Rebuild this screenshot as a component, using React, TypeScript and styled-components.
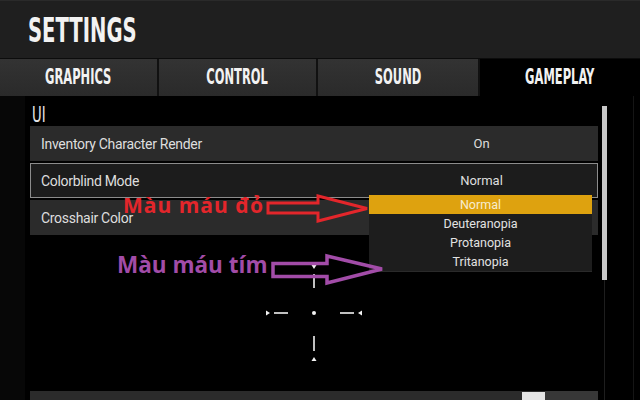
import React from "react";
import styled, { createGlobalStyle } from "styled-components";

const GlobalStyle = createGlobalStyle`
  html, body {
    margin: 0;
    padding: 0;
    background: #000;
  }
  body {
    font-family: Roboto, "Liberation Sans", sans-serif;
  }
`;

const Screen = styled.div`
  position: relative;
  width: 640px;
  height: 400px;
  overflow: hidden;
  background: #000;
`;

const Header = styled.div`
  height: 58px;
  box-sizing: border-box;
  border-top: 1px solid #2a2a2a;
  background: #1f1f1f;
  display: flex;
  align-items: center;
  padding-left: 28px;
`;

const Condensed = styled.span<{ $size: number; $scale: number; $weight?: number }>`
  display: inline-block;
  font-family: "DejaVu Sans Condensed", "DejaVu Sans", sans-serif;
  font-stretch: condensed;
  font-weight: ${(p) => p.$weight ?? 700};
  font-size: ${(p) => p.$size}px;
  line-height: ${(p) => p.$size}px;
  color: #f2f2f2;
  transform: scaleX(${(p) => p.$scale});
`;

const Title = styled(Condensed)`
  transform-origin: left center;
  margin-top: 2px;
`;

const TabBar = styled.div`
  height: 38px;
  box-sizing: border-box;
  border-top: 1px solid #0c0c0c;
  display: grid;
  grid-template-columns: 157px 157px 160px 1fr;
  column-gap: 2px;
  background: #111;
`;

const Tab = styled.div<{ $active?: boolean }>`
  display: flex;
  align-items: center;
  justify-content: center;
  background: ${(p) => (p.$active ? "#000" : "linear-gradient(#333, #2a2a2a)")};
`;

const TabLabel = styled(Condensed)`
  transform-origin: center;
  margin-top: -1px;
`;

const Content = styled.div`
  display: flex;
  height: 304px;
  overflow: hidden;
  background: linear-gradient(to right, #070707 25px, #000 25px);
`;

const Main = styled.div`
  margin-left: 30px;
  width: 568px;
  display: flex;
  flex-direction: column;
  flex-shrink: 0;
`;

const SectionLabel = styled.div`
  height: 32px;
  box-sizing: border-box;
  padding: 9px 0 0 2px;
`;

const UiLabel = styled(Condensed)`
  transform-origin: left center;
  color: #e6e6e6;
`;

const Rows = styled.div`
  display: flex;
  flex-direction: column;
  gap: 2px;
`;

const Row = styled.div<{ $selected?: boolean }>`
  position: relative;
  height: 35px;
  box-sizing: border-box;
  display: grid;
  grid-template-columns: 335px 1fr;
  align-items: center;
  background: ${(p) => (p.$selected ? "#1c1c1c" : "#2b2b2b")};
  border: 1px solid ${(p) => (p.$selected ? "#8c8c8c" : "transparent")};
  color: #dedede;
`;

const RowName = styled.span`
  padding-left: 10px;
  font-size: 14px;
  letter-spacing: -0.3px;
`;

const RowValue = styled.span`
  text-align: center;
  font-size: 13px;
`;

const Dropdown = styled.ul`
  position: absolute;
  left: 338px;
  top: 31px;
  width: 223px;
  margin: 0;
  padding: 0;
  list-style: none;
  background: #1d1d1d;
  border-bottom: 1px solid #2a2a2a;
  z-index: 2;
`;

const Option = styled.li<{ $active?: boolean }>`
  height: 19px;
  line-height: 19px;
  text-align: center;
  font-size: 12.5px;
  color: ${(p) => (p.$active ? "#f7ecd0" : "#e2e2e2")};
  background: ${(p) => (p.$active ? "#dea20f" : "transparent")};
`;

const Preview = styled.div`
  height: 156px;
  flex-shrink: 0;
  display: flex;
  align-items: center;
  justify-content: center;
`;

const BottomRow = styled.div`
  height: 35px;
  flex-shrink: 0;
  background: #2b2b2b;
  display: flex;
  justify-content: flex-end;
`;

const Swatch = styled.div`
  width: 23px;
  margin-top: 1px;
  background: #e4e4e4;
`;

const SliderBox = styled.div`
  width: 53px;
  background: #373737;
`;

const ScrollColumn = styled.div`
  flex: 1;
  padding: 10px 0 0 4px;
  background: linear-gradient(to right, transparent 35px, #151515 35px, #151515 36px, transparent 36px);
`;

const Track = styled.div`
  width: 5px;
  height: 100%;
  background: linear-gradient(to right, transparent 2px, #1e1e1e 2px, #1e1e1e 3px, transparent 3px);
`;

const Thumb = styled.div`
  width: 5px;
  height: 174px;
  background: #c8c8c8;
`;

const Note = styled.span<{ $color: string; $size: number; $spacing?: number }>`
  position: absolute;
  font-family: "Open Sans", "DejaVu Sans", sans-serif;
  font-weight: 700;
  font-size: ${(p) => p.$size}px;
  line-height: ${(p) => p.$size}px;
  letter-spacing: ${(p) => p.$spacing ?? 0}px;
  color: ${(p) => p.$color};
  white-space: nowrap;
  z-index: 3;
`;

const ArrowSvg = styled.svg`
  position: absolute;
  overflow: visible;
  z-index: 3;
`;

const Crosshair = () => (
  <svg width="110" height="110" viewBox="-55 -55 110 110">
    <g stroke="#f2f2f2" strokeWidth="1.6" fill="none">
      <line x1="0" y1="-39" x2="0" y2="-25" />
      <line x1="0" y1="23" x2="0" y2="38" />
      <line x1="-40" y1="0" x2="-26" y2="0" />
      <line x1="26" y1="0" x2="40" y2="0" />
    </g>
    <g fill="#f2f2f2">
      <circle cx="0" cy="0" r="2" />
      <polygon points="-2.5,-48 2.5,-48 0,-44" />
      <polygon points="-2.5,48 2.5,48 0,44" />
      <polygon points="-48,-2.5 -48,2.5 -44,0" />
      <polygon points="48,-2.5 48,2.5 44,0" />
    </g>
  </svg>
);

const tabs = ["GRAPHICS", "CONTROL", "SOUND", "GAMEPLAY"];
const options = ["Normal", "Deuteranopia", "Protanopia", "Tritanopia"];

export default function App() {
  return (
    <>
      <GlobalStyle />
      <Screen>
        <Header>
          <Title $size={33} $scale={0.66}>SETTINGS</Title>
        </Header>
        <TabBar>
          {tabs.map((t) => (
            <Tab key={t} $active={t === "GAMEPLAY"}>
              <TabLabel $size={22} $scale={0.58}>{t}</TabLabel>
            </Tab>
          ))}
        </TabBar>
        <Content>
          <Main>
            <SectionLabel>
              <UiLabel $size={21} $scale={0.7} $weight={400}>UI</UiLabel>
            </SectionLabel>
            <Rows>
              <Row>
                <RowName>Inventory Character Render</RowName>
                <RowValue>On</RowValue>
              </Row>
              <Row $selected>
                <RowName>Colorblind Mode</RowName>
                <RowValue>Normal</RowValue>
                <Dropdown>
                  {options.map((o, i) => (
                    <Option key={o} $active={i === 0}>{o}</Option>
                  ))}
                </Dropdown>
              </Row>
              <Row>
                <RowName>Crosshair Color</RowName>
                <RowValue />
              </Row>
            </Rows>
            <Preview>
              <Crosshair />
            </Preview>
            <BottomRow>
              <Swatch />
              <SliderBox />
            </BottomRow>
          </Main>
          <ScrollColumn>
            <Track>
              <Thumb />
            </Track>
          </ScrollColumn>
        </Content>

        <Note $color="#e3262b" $size={21} $spacing={1} style={{ left: 123, top: 195 }}>Màu máu đỏ</Note>
        <ArrowSvg width="110" height="34" style={{ left: 264, top: 191 }} viewBox="264 191 110 34">
          <path d="M268 203 H318 V196 L367 208.5 L318 221 V213 H268 Z" fill="none" stroke="#e3262b" strokeWidth="3" strokeLinejoin="miter" />
        </ArrowSvg>

        <Note $color="#a24ca8" $size={22.5} style={{ left: 117, top: 254 }}>Màu máu tím</Note>
        <ArrowSvg width="120" height="36" style={{ left: 268, top: 252 }} viewBox="268 252 120 36">
          <path d="M273 263.5 H327 V256 L382 269 L327 283 V276.5 H273 Z" fill="none" stroke="#a24ca8" strokeWidth="3.5" strokeLinejoin="miter" />
        </ArrowSvg>
      </Screen>
    </>
  );
}
